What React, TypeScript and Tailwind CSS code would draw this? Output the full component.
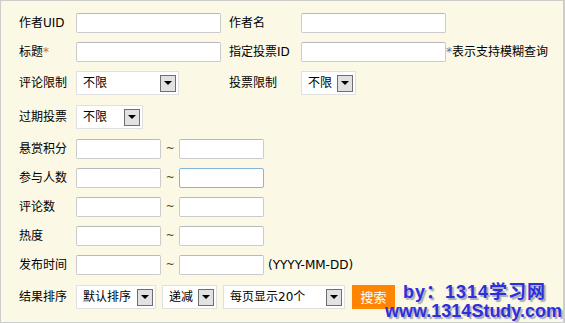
import React from 'react';

const labelCls = 'shrink-0';

function TextInput({ w, focus }: { w: number; focus?: boolean }) {
  return (
    <input
      type="text"
      style={{ width: w }}
      className={`h-[20px] rounded-[2px] bg-white border outline-none ${
        focus ? 'border-[#86b5dc]' : 'border-[#cbcbcb] border-t-[#b9b9b9]'
      }`}
    />
  );
}

function FakeSelect({ w, text }: { w: number; text: string }) {
  return (
    <div
      style={{ width: w }}
      className="h-[24px] flex items-center justify-between bg-white border border-[#e0e0e0] pl-[6px] pr-[2px]"
    >
      <span>{text}</span>
      <span className="w-[16px] h-[17px] border border-[#6e6e6e] bg-[#e2e2e2] flex items-center justify-center">
        <svg width="8" height="4" viewBox="0 0 8 4">
          <path d="M0 0H8L4 4Z" fill="#000" />
        </svg>
      </span>
    </div>
  );
}

function RangeRow({ label, focusSecond, suffix }: { label: string; focusSecond?: boolean; suffix?: string }) {
  return (
    <div className="flex items-center h-[29px]">
      <span className={`${labelCls} w-[57px]`}>{label}</span>
      <TextInput w={85} />
      <span className="w-[18px] text-center text-[11px] text-[#4d4a20]">~</span>
      <TextInput w={85} focus={focusSecond} />
      {suffix && <span className="ml-[4px]">{suffix}</span>}
    </div>
  );
}

export default function App() {
  return (
    <div className="relative w-[565px] h-[323px] overflow-hidden bg-[#fbf8e5] border border-[#cdcdcd] border-r-2 text-[12px] text-[#000] font-['DejaVu_Sans','Noto_Sans_CJK_SC',sans-serif] leading-none">
      <div className="pt-[7px] pl-[18px] flex flex-col">
        <div className="flex items-center h-[29px]">
          <span className={`${labelCls} w-[57px]`}>作者UID</span>
          <TextInput w={145} />
          <span className={`${labelCls} w-[72px] ml-[8px]`}>作者名</span>
          <TextInput w={145} />
        </div>

        <div className="flex items-center h-[29px]">
          <span className={`${labelCls} w-[57px]`}>
            标题<span className="text-[#d2691e]">*</span>
          </span>
          <TextInput w={145} />
          <span className={`${labelCls} w-[72px] ml-[8px]`}>指定投票ID</span>
          <TextInput w={145} />
          <span>
            <span className="text-[#3a7fc0]">*</span>表示支持模糊查询
          </span>
        </div>

        <div className="flex items-center h-[34px]">
          <span className={`${labelCls} w-[57px]`}>评论限制</span>
          <FakeSelect w={103} text="不限" />
          <span className={`${labelCls} w-[72px] ml-[50px]`}>投票限制</span>
          <FakeSelect w={55} text="不限" />
        </div>

        <div className="flex items-center h-[34px]">
          <span className={`${labelCls} w-[57px]`}>过期投票</span>
          <FakeSelect w={67} text="不限" />
        </div>

        <RangeRow label="悬赏积分" />
        <RangeRow label="参与人数" focusSecond />
        <RangeRow label="评论数" />
        <RangeRow label="热度" />
        <RangeRow label="发布时间" suffix="(YYYY-MM-DD)" />

        <div className="flex items-center h-[36px] gap-[6px]">
          <span className={`${labelCls} w-[51px]`}>结果排序</span>
          <FakeSelect w={80} text="默认排序" />
          <FakeSelect w={55} text="递减" />
          <FakeSelect w={122} text="每页显示20个" />
          <button className="ml-[1px] w-[43px] h-[24px] bg-[#ff8500] text-white text-[13px]">搜索</button>
        </div>
      </div>

      <div className="absolute left-[384px] top-[282px] font-['Liberation_Sans','Noto_Sans_CJK_SC',sans-serif] font-bold text-[18px] leading-[19px] text-[#2d2fdc] [text-shadow:2px_2px_1px_#a9a9b8]">
        <div className="pl-[18px] tracking-[1px]">by：1314学习网</div>
        <div>www.1314Study.com</div>
      </div>
    </div>
  );
}
